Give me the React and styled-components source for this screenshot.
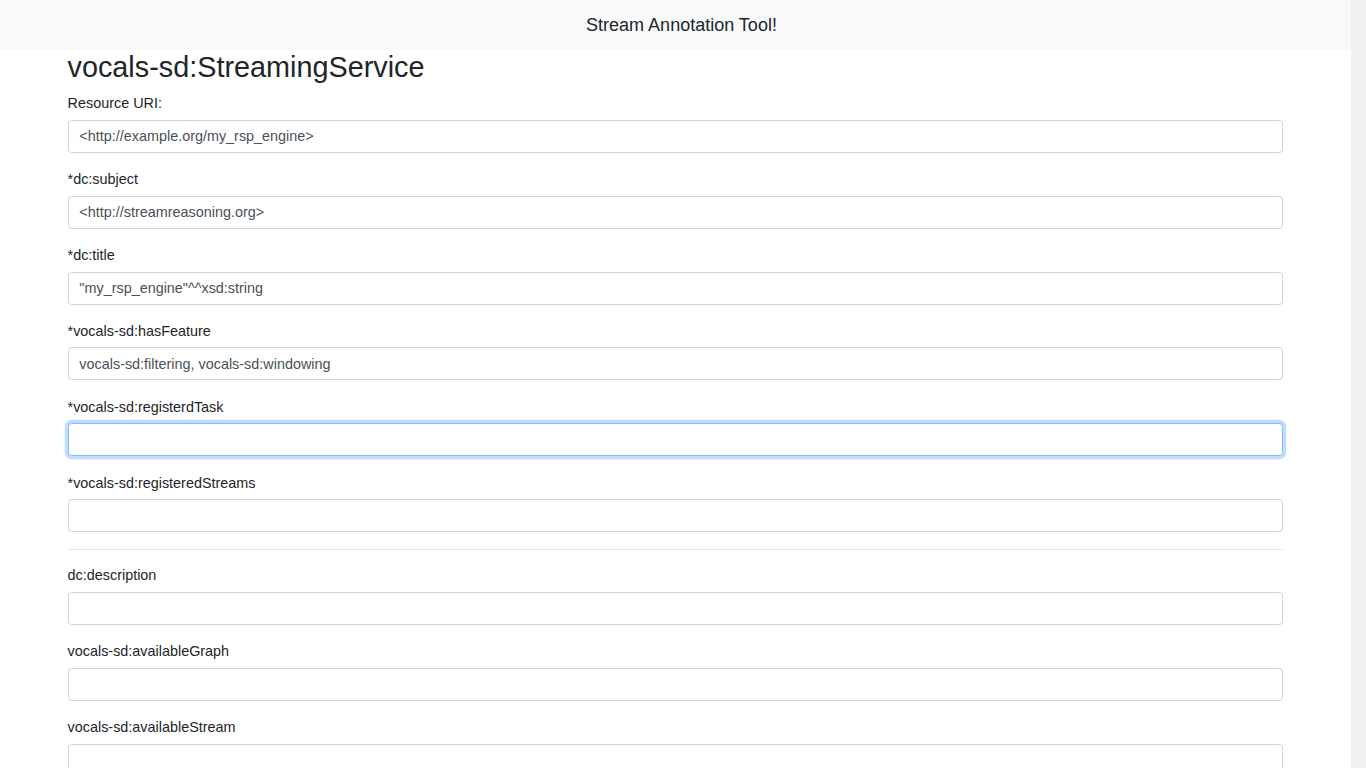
import styled, { createGlobalStyle, css } from "styled-components";

const GlobalStyle = createGlobalStyle`
  html {
    background: #f1f1f1;
  }
  html, body {
    margin: 0;
    padding: 0;
  }
  body {
    margin-right: 15px;
    background: #fff;
    font-family: "Liberation Sans", Arial, sans-serif;
    font-size: 14.4px;
    line-height: 1.5;
    color: #212529;
  }
  * {
    box-sizing: border-box;
  }
`;

const Navbar = styled.nav`
  height: 50px;
  background: #f8f9fa;
  display: flex;
  align-items: center;
  justify-content: center;
  padding-left: 12px;
`;

const Brand = styled.span`
  font-size: 18px;
  line-height: 27px;
  color: #212529;
`;

const Main = styled.main`
  width: 90%;
  margin: 0 auto;
  padding-bottom: 40px;
`;

const Title = styled.h2`
  margin: 0 0 8.4px;
  font-size: 28.8px;
  line-height: 1.2;
  font-weight: 400;
  color: #212529;
`;

const FormGroup = styled.div`
  margin-bottom: 16.4px;
`;

const Label = styled.label`
  display: block;
  margin-bottom: 5px;
  font-size: 14.4px;
  line-height: 21.6px;
`;

const Input = styled.input`
  display: block;
  width: 100%;
  height: 33px;
  padding: 5px 10.8px;
  font-family: inherit;
  font-size: 14.4px;
  line-height: 1.5;
  color: #495057;
  background: #fff;
  border: 1px solid #ced4da;
  border-radius: 3.6px;
  outline: none;
  caret-color: #212529;

  ${(p) =>
    p.$active &&
    css`
      border-color: #80bdff;
      box-shadow: 0 0 0 3.2px rgba(0, 123, 255, 0.25);
    `}

  &:focus {
    border-color: #80bdff;
    box-shadow: 0 0 0 3.2px rgba(0, 123, 255, 0.25);
  }
`;

const Divider = styled.hr`
  margin: 16.4px 0 15.4px;
  border: 0;
  border-top: 1px solid rgba(0, 0, 0, 0.1);
`;

const Button = styled.button`
  font-family: inherit;
  font-size: 14.4px;
  line-height: 1.5;
  padding: 5.4px 10.8px;
  color: #fff;
  background: #007bff;
  border: 1px solid #007bff;
  border-radius: 3.6px;
`;

const required = [
  { label: "Resource URI:", value: "<http://example.org/my_rsp_engine>" },
  { label: "*dc:subject", value: "<http://streamreasoning.org>" },
  { label: "*dc:title", value: '"my_rsp_engine"^^xsd:string' },
  { label: "*vocals-sd:hasFeature", value: "vocals-sd:filtering, vocals-sd:windowing" },
  { label: "*vocals-sd:registerdTask", value: "", focus: true },
  { label: "*vocals-sd:registeredStreams", value: "" },
];

const optional = [
  "dc:description",
  "vocals-sd:availableGraph",
  "vocals-sd:availableStream",
  "vocals-sd:hasEndpoint",
  "vocals-sd:resultFormat",
  "dcat:landingPage",
  "dc:publisher",
];

function Field({ label, value, focus }) {
  return (
    <FormGroup>
      <Label>{label}</Label>
      <Input defaultValue={value} autoFocus={focus} $active={focus} />
    </FormGroup>
  );
}

export default function App() {
  return (
    <>
      <GlobalStyle />
      <Navbar>
        <Brand>Stream Annotation Tool!</Brand>
      </Navbar>
      <Main>
        <Title>vocals-sd:StreamingService</Title>
        {required.map((f) => (
          <Field key={f.label} {...f} />
        ))}
        <Divider />
        {optional.map((l) => (
          <Field key={l} label={l} value="" />
        ))}
        <Button>Submit</Button>
      </Main>
    </>
  );
}
